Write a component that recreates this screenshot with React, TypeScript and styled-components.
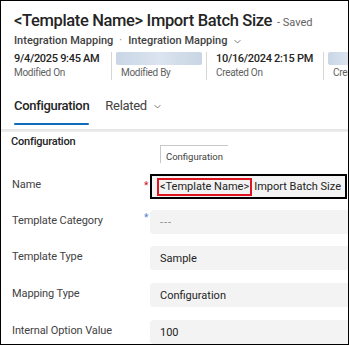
import React from "react";
import styled, { createGlobalStyle } from "styled-components";

const Global = createGlobalStyle`
  html, body { margin: 0; padding: 0; background: #fff; }
  body { font-family: Roboto, "Noto Sans", sans-serif; color: #242424; }
  * { box-sizing: border-box; }
`;

const Frame = styled.div`
  width: 349px;
  height: 345px;
  border: 1px solid #000;
  overflow: hidden;
  background: #fff;
  display: flex;
  flex-direction: column;
`;

const Header = styled.div`
  padding: 8px 0 0 13px;
  display: flex;
  flex-direction: column;
`;

const TitleRow = styled.div`
  display: flex;
  align-items: baseline;
  gap: 5px;
  white-space: nowrap;
  height: 24px;
`;

const Title = styled.h1`
  margin: 0;
  font-size: 16.5px;
  line-height: 24px;
  font-weight: 500;
  letter-spacing: -0.35px;
  color: #242424;
`;

const Saved = styled.span`
  font-size: 11px;
  color: #616161;
`;

const Crumbs = styled.div`
  display: flex;
  align-items: center;
  gap: 6px;
  font-size: 11px;
  font-weight: 500;
  color: #424242;
  line-height: 16px;
  white-space: nowrap;
`;

const Dot = styled.span`
  color: #8a8a8a;
  font-weight: 400;
`;

const Meta = styled.div`
  display: flex;
  margin-top: 3px;
  height: 28px;
`;

const MetaCol = styled.div<{ $w: number; $first?: boolean }>`
  flex: 0 0 ${(p) => p.$w}px;
  padding-left: ${(p) => (p.$first ? 0 : 9)}px;
  border-left: ${(p) => (p.$first ? "none" : "1px solid #d6d6d6")};
  display: flex;
  flex-direction: column;
  white-space: nowrap;
  overflow: hidden;
`;

const MetaValue = styled.div`
  font-size: 11px;
  font-weight: 500;
  line-height: 14px;
  letter-spacing: -0.3px;
  color: #242424;
`;

const MetaLabel = styled.div`
  font-size: 10px;
  line-height: 13px;
  letter-spacing: -0.3px;
  color: #616161;
`;

const Blur = styled.div<{ $w: number }>`
  width: ${(p) => p.$w}px;
  height: 13px;
  margin-left: -5px;
  margin-bottom: 1px;
  border-radius: 2px;
  background: linear-gradient(90deg, #c9d6e6, #dbe4ef 50%, #c9d5e4);
`;

const Tabs = styled.div`
  display: flex;
  gap: 16px;
  margin-top: 16px;
  height: 29px;
`;

const Tab = styled.div<{ $active?: boolean }>`
  position: relative;
  font-size: 13px;
  line-height: 20px;
  letter-spacing: -0.3px;
  font-weight: ${(p) => (p.$active ? 500 : 400)};
  color: ${(p) => (p.$active ? "#242424" : "#424242")};
  display: flex;
  align-items: flex-start;
  gap: 6px;
  height: 29px;
  &::after {
    content: "";
    display: ${(p) => (p.$active ? "block" : "none")};
    position: absolute;
    left: 0;
    right: 0;
    bottom: 0;
    height: 2px;
    border-radius: 1px;
    background: #0f6cbd;
  }
`;

const ChevWrap = styled.span`
  display: flex;
  padding-top: 6px;
`;

const Divider = styled.div`
  margin-top: 4px;
  height: 3px;
  background: linear-gradient(#e4e4e4, #eeeeee);
`;

const Body = styled.div`
  padding: 2px 0 0 10px;
  display: flex;
  flex-direction: column;
`;

const SectionTitle = styled.div`
  font-size: 11px;
  font-weight: 500;
  line-height: 16px;
  letter-spacing: -0.2px;
  color: #242424;
`;

const MiniTabRow = styled.div`
  padding-left: 149px;
  margin-top: -5px;
`;

const MiniTab = styled.div`
  display: inline-block;
  border-left: 1px solid #c8c8c8;
  border-top: 1px solid #c8c8c8;
  font-size: 9.5px;
  line-height: 13px;
  height: 18px;
  padding: 4px 5px 0 5px;
  color: #424242;
`;

const Row = styled.div<{ $mt: number }>`
  display: flex;
  align-items: flex-start;
  margin-top: ${(p) => p.$mt}px;
  height: 24px;
`;

const Label = styled.div`
  flex: 0 0 133px;
  font-size: 11px;
  line-height: 16px;
  letter-spacing: -0.1px;
  padding-top: 3px;
  padding-left: 1px;
  color: #424242;
  white-space: nowrap;
`;

const Req = styled.div<{ $c: string; $top: number }>`
  flex: 0 0 6px;
  font-size: 10px;
  line-height: 10px;
  padding-top: ${(p) => p.$top}px;
  color: ${(p) => p.$c};
`;

const Field = styled.div<{ $outlined?: boolean }>`
  flex: 0 0 ${(p) => (p.$outlined ? 197 : 210)}px;
  height: ${(p) => (p.$outlined ? 25 : 24)}px;
  background: #f3f3f3;
  border-radius: ${(p) => (p.$outlined ? 0 : 4)}px;
  border: ${(p) => (p.$outlined ? "2px solid #000" : "none")};
  display: flex;
  align-items: center;
  padding-left: ${(p) => (p.$outlined ? 5 : 10)}px;
  font-size: 11px;
  color: #242424;
  white-space: nowrap;
`;

const Highlight = styled.span`
  border: 2px solid #e0141e;
  padding: 0 1px;
  line-height: 14px;
  margin-right: 2px;
`;

const Muted = styled.span`
  color: #8a8a8a;
  letter-spacing: 1px;
`;

const Chevron = () => (
  <svg width="9" height="9" viewBox="0 0 12 12" fill="none">
    <path d="M2.5 4.5 6 8l3.5-3.5" stroke="#616161" strokeWidth="1.1" strokeLinecap="round" strokeLinejoin="round" />
  </svg>
);

const fields = [
  { label: "Template Category", req: "#4f7fd1", value: <Muted>---</Muted>, mt: 12 },
  { label: "Template Type", req: "", value: "Sample", mt: 12 },
  { label: "Mapping Type", req: "", value: "Configuration", mt: 13 },
  { label: "Internal Option Value", req: "", value: "100", mt: 13 },
];

export default function App() {
  return (
    <>
      <Global />
      <Frame>
        <Header>
          <TitleRow>
            <Title>&lt;Template Name&gt; Import Batch Size</Title>
            <Saved>- Saved</Saved>
          </TitleRow>
          <Crumbs>
            <span>Integration Mapping</span>
            <Dot>·</Dot>
            <span>Integration Mapping</span>
            <Chevron />
          </Crumbs>
          <Meta>
            <MetaCol $w={97} $first>
              <MetaValue>9/4/2025 9:45 AM</MetaValue>
              <MetaLabel>Modified On</MetaLabel>
            </MetaCol>
            <MetaCol $w={95}>
              <Blur $w={86} />
              <MetaLabel>Modified By</MetaLabel>
            </MetaCol>
            <MetaCol $w={117}>
              <MetaValue>10/16/2024 2:15 PM</MetaValue>
              <MetaLabel>Created On</MetaLabel>
            </MetaCol>
            <MetaCol $w={40}>
              <Blur $w={40} />
              <MetaLabel>Created By</MetaLabel>
            </MetaCol>
          </Meta>
          <Tabs>
            <Tab $active>Configuration</Tab>
            <Tab>
              Related
              <ChevWrap>
                <Chevron />
              </ChevWrap>
            </Tab>
          </Tabs>
        </Header>
        <Divider />
        <Body>
          <SectionTitle>Configuration</SectionTitle>
          <MiniTabRow>
            <MiniTab>Configuration</MiniTab>
          </MiniTabRow>
          <Row $mt={10}>
            <Label>Name</Label>
            <Req $c="#c50f1f" $top={7}>*</Req>
            <Field $outlined>
              <Highlight>&lt;Template Name&gt;</Highlight>Import Batch Size
            </Field>
          </Row>
          {fields.map((f) => (
            <Row key={f.label} $mt={f.mt}>
              <Label>{f.label}</Label>
              <Req $c={f.req || "transparent"} $top={3}>*</Req>
              <Field>{f.value}</Field>
            </Row>
          ))}
        </Body>
      </Frame>
    </>
  );
}
